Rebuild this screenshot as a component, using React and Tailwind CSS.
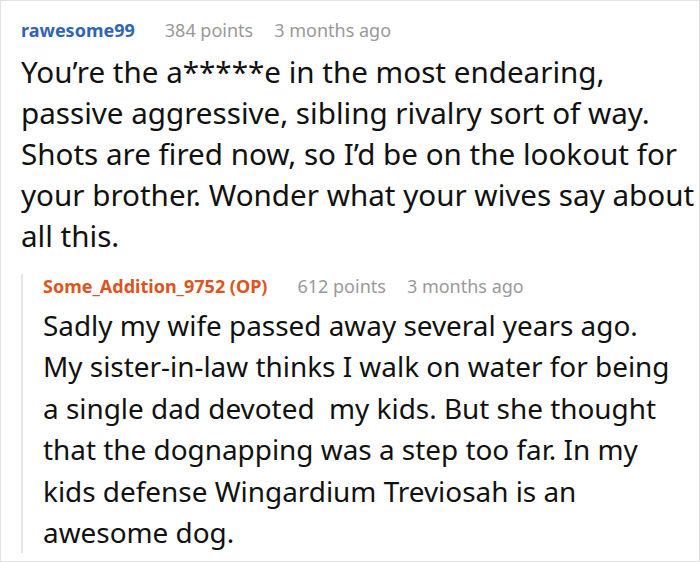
const FONT = { fontFamily: '"Noto Sans", "Open Sans", sans-serif' };

function Meta({ name, nameClass, points, ago, className = "" }) {
  return (
    <div className={`flex items-baseline text-[18px] leading-[24px] ${className}`}>
      <span className={`font-bold ${nameClass}`}>{name}</span>
      <span className="ml-[30px] text-[#999]">{points} points</span>
      <span className="ml-[21px] text-[#999]">{ago}</span>
    </div>
  );
}

export default function App() {
  return (
    <div style={FONT} className="w-[700px] h-[562px] bg-white border border-[#e2e2e2] overflow-hidden">
      <div className="pl-[20px] pt-[17px]">
        <Meta name="rawesome99" nameClass="text-[#2f64b6]" points="384" ago="3 months ago" />
        <p className="mt-[9px] text-[29.6px] leading-[41px] text-[#111]">
          You’re the a*****e in the most endearing, passive aggressive, sibling rivalry sort of way. Shots are fired now, so I’d be on the lookout for your brother. Wonder what your wives say about all this.
        </p>
        <div className="mt-[26px] border-l-2 border-[#e6e6e6] pl-[20px] pr-[22px]">
          <Meta className="-mt-[8px]" name="Some_Addition_9752 (OP)" nameClass="text-[#dd5420]" points="612" ago="3 months ago" />
          <p className="mt-[7px] -mb-[8px] text-[27.9px] leading-[41.4px] text-[#111]">
            Sadly my wife passed away several years ago. My sister-in-law thinks I walk on water for being a single dad devoted&nbsp; my kids. But she thought that the dognapping was a step too far. In my kids defense Wingardium Treviosah is an awesome dog.
          </p>
        </div>
      </div>
    </div>
  );
}
